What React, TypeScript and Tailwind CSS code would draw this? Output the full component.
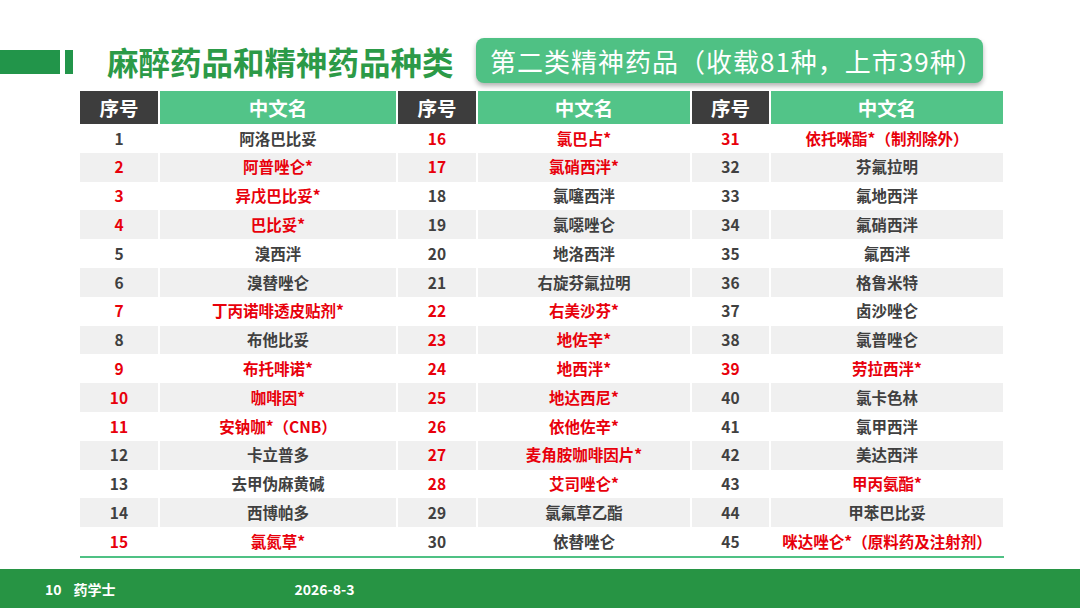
import React from "react";

type Item = { n: number; name: string; red: boolean; numRed: boolean };

const mk = (n: number, name: string, red = false, numRed = red): Item => ({ n, name, red, numRed });

const col1: Item[] = [
  mk(1, "阿洛巴比妥"),
  mk(2, "阿普唑仑*", true),
  mk(3, "异戊巴比妥*", true),
  mk(4, "巴比妥*", true),
  mk(5, "溴西泮"),
  mk(6, "溴替唑仑"),
  mk(7, "丁丙诺啡透皮贴剂*", true),
  mk(8, "布他比妥"),
  mk(9, "布托啡诺*", true),
  mk(10, "咖啡因*", true),
  mk(11, "安钠咖*（CNB）", true),
  mk(12, "卡立普多"),
  mk(13, "去甲伪麻黄碱"),
  mk(14, "西博帕多"),
  mk(15, "氯氮草*", true),
];

const col2: Item[] = [
  mk(16, "氯巴占*", true),
  mk(17, "氯硝西泮*", true),
  mk(18, "氯噻西泮"),
  mk(19, "氯噁唑仑"),
  mk(20, "地洛西泮"),
  mk(21, "右旋芬氟拉明"),
  mk(22, "右美沙芬*", true),
  mk(23, "地佐辛*", true),
  mk(24, "地西泮*", true),
  mk(25, "地达西尼*", true),
  mk(26, "依他佐辛*", true),
  mk(27, "麦角胺咖啡因片*", true),
  mk(28, "艾司唑仑*", true),
  mk(29, "氯氟草乙酯"),
  mk(30, "依替唑仑"),
];

const col3: Item[] = [
  mk(31, "依托咪酯*（制剂除外）", true),
  mk(32, "芬氟拉明"),
  mk(33, "氟地西泮"),
  mk(34, "氟硝西泮"),
  mk(35, "氟西泮"),
  mk(36, "格鲁米特"),
  mk(37, "卤沙唑仑"),
  mk(38, "氯普唑仑"),
  mk(39, "劳拉西泮*", true),
  mk(40, "氯卡色林"),
  mk(41, "氯甲西泮"),
  mk(42, "美达西泮"),
  mk(43, "甲丙氨酯*", true, false),
  mk(44, "甲苯巴比妥"),
  mk(45, "咪达唑仑*（原料药及注射剂）", true, false),
];

const FONT = "font-['Noto_Sans_CJK_SC','Noto_Sans',sans-serif]";

function Cell({ text, red, gray }: { text: string | number; red: boolean; gray: boolean }) {
  return (
    <div
      className={`h-[28.8px] flex items-center justify-center text-[15.5px] font-bold leading-none whitespace-nowrap ${
        gray ? "bg-[#f0f0f0]" : "bg-white"
      } ${red ? "text-[#e8000b]" : "text-[#404040]"}`}
    >
      {text}
    </div>
  );
}

export default function App() {
  const rows = col1.map((_, i) => i);
  return (
    <div className={`w-[1080px] h-[608px] bg-white flex flex-col overflow-hidden ${FONT}`}>
      {/* Title row */}
      <div className="mt-[38px] h-[45px] flex items-center">
        <div className="w-[60px] h-[24px] bg-[#22954a] mt-[3px]" />
        <div className="ml-[5px] w-[8px] h-[24px] bg-[#22954a] mt-[3px]" />
        <div className="ml-[34px] w-[369px] text-[31.5px] font-bold text-[#2c9a47] leading-none mt-[3px] whitespace-nowrap">
          麻醉药品和精神药品种类
        </div>
        <div className="w-[507px] h-[45px] rounded-[8px] bg-[#4fc184] shadow-[0_3px_5px_rgba(0,0,0,0.3)] flex items-center pl-[14px] text-white text-[26px] tracking-[1px] leading-none whitespace-nowrap">
          第二类精神药品（收载81种，上市39种）
        </div>
      </div>

      {/* Table */}
      <div className="mt-[8px] ml-[80px] w-[924px]">
        <div className="grid grid-cols-[78px_236px_78px_212px_77px_232px] gap-x-[2px]">
          {["序号", "中文名", "序号", "中文名", "序号", "中文名"].map((h, i) => (
            <div
              key={i}
              className={`h-[33px] flex items-center justify-center text-white text-[19.5px] font-bold leading-none ${
                i % 2 === 0 ? "bg-[#3d3d3d]" : "bg-[#52c488]"
              }`}
            >
              {h}
            </div>
          ))}
          {rows.map((i) => {
            const gray = i % 2 === 1;
            return (
              <React.Fragment key={i}>
                {[col1[i], col2[i], col3[i]].map((it) => (
                  <React.Fragment key={it.n}>
                    <Cell text={it.n} red={it.numRed} gray={gray} />
                    <Cell text={it.name} red={it.red} gray={gray} />
                  </React.Fragment>
                ))}
              </React.Fragment>
            );
          })}
        </div>
        <div className="h-[2px] bg-[#4fc184]" />
      </div>

      {/* Footer */}
      <div className="mt-auto h-[39px] bg-[#279444] flex items-center text-white text-[14px] font-bold leading-none">
        <span className="ml-[45px]">10</span>
        <span className="ml-[12px]">药学士</span>
        <span className="ml-[179px]">2026-8-3</span>
      </div>
    </div>
  );
}
